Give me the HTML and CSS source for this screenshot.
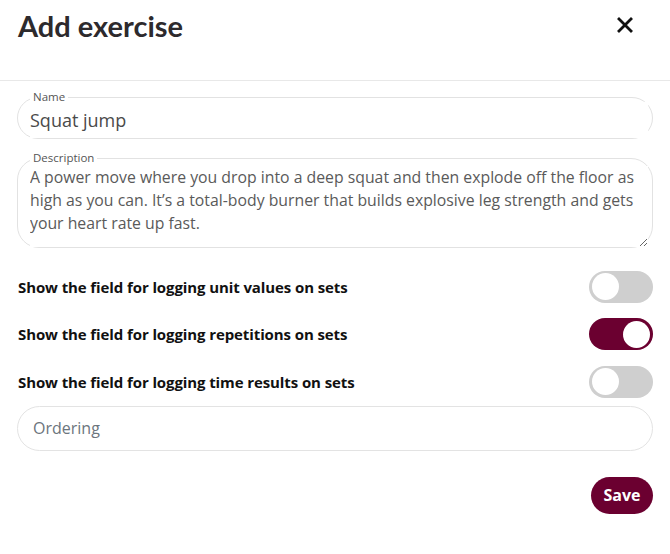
FILE: index.html
```html
<!DOCTYPE html>
<html lang="en">
<head>
<meta charset="utf-8">
<title>Add exercise</title>
<link rel="stylesheet" href="styles.css">
</head>
<body>
<div class="modal">
  <header class="modal-header">
    <h1 class="title">Add exercise</h1>
    <button class="close" aria-label="Close">
      <svg width="16" height="16" viewBox="0 0 16 16"><path d="M2 2L14 14M14 2L2 14" stroke="#111" stroke-width="2.8" stroke-linecap="square" fill="none"/></svg>
    </button>
  </header>
  <form class="form">
    <fieldset class="field field-name">
      <legend class="legend">Name</legend>
      <input class="field-input" type="text" value="Squat jump">
    </fieldset>
    <fieldset class="field field-desc">
      <legend class="legend">Description</legend>
      <textarea class="field-area">A power move where you drop into a deep squat and then explode off the floor as high as you can. It’s a total-body burner that builds explosive leg strength and gets your heart rate up fast.</textarea>
    </fieldset>
    <div class="toggles">
      <div class="toggle-row">
        <span class="toggle-label">Show the field for logging unit values on sets</span>
        <span class="switch"><span class="knob"></span></span>
      </div>
      <div class="toggle-row">
        <span class="toggle-label">Show the field for logging repetitions on sets</span>
        <span class="switch on"><span class="knob"></span></span>
      </div>
      <div class="toggle-row">
        <span class="toggle-label">Show the field for logging time results on sets</span>
        <span class="switch"><span class="knob"></span></span>
      </div>
    </div>
    <input class="ordering" type="text" placeholder="Ordering">
    <div class="actions">
      <button type="button" class="save">Save</button>
    </div>
  </form>
</div>
</body>
</html>
```
FILE: styles.css
```css
* { box-sizing: border-box; }
html, body { margin: 0; padding: 0; background: #fff; }
body { font-family: "Open Sans", "Liberation Sans", sans-serif; color: #222; }

.modal { width: 670px; }

.modal-header {
  height: 81px;
  border-bottom: 1px solid #e8e8e8;
  display: flex;
  justify-content: space-between;
  align-items: flex-start;
  padding: 0 37px 0 18px;
}
.title {
  margin: 7px 0 0;
  font-family: Lato, "Open Sans", sans-serif;
  font-weight: 700;
  font-size: 29px;
  line-height: 38px;
  color: #2d2a2d;
  letter-spacing: 0;
}
.close {
  margin-top: 17px;
  padding: 0;
  border: 0;
  background: none;
  width: 16px;
  height: 16px;
  display: block;
}
.close svg { display: block; }

.form { padding: 9px 17px 0; display: flex; flex-direction: column; }

.field {
  margin: 0;
  border: 1px solid #e2e2e2;
  border-radius: 22px;
  padding: 0 4px 0 12px;
  min-width: 0;
}
.legend {
  font-size: 11.5px;
  line-height: 14px;
  color: #555;
  padding: 0 3px;
  margin-left: 0;
}
.field-input {
  display: block;
  width: 100%;
  border: 0;
  outline: none;
  font-family: "Open Sans", sans-serif;
  font-size: 18px;
  color: #4a4a4a;
  padding: 0;
  height: 36px;
  line-height: 24px;
  margin-top: -2px;
}
.field-desc { margin-top: 12px; }
.field-area {
  display: block;
  width: 100%;
  border: 0;
  outline: none;
  resize: vertical;
  font-family: "Open Sans", sans-serif;
  font-size: 15.8px;
  line-height: 23px;
  color: #5a5a5a;
  padding: 0;
  height: 81px;
  margin-top: 1px;
  overflow: hidden;
}

.toggles { margin-top: 15px; display: flex; flex-direction: column; }
.toggle-row {
  height: 47.5px;
  display: flex;
  align-items: center;
  justify-content: space-between;
  padding-left: 1px;
}
.toggle-label {
  font-weight: 700;
  font-size: 15px;
  color: #111;
  letter-spacing: -0.1px;
}
.switch {
  width: 64px;
  height: 32px;
  border-radius: 16px;
  background: #cfcfcf;
  display: flex;
  align-items: center;
  padding: 0 3px;
}
.knob {
  width: 27px;
  height: 27px;
  border-radius: 50%;
  background: #fff;
}
.switch.on { background: #6b0030; justify-content: flex-end; }

.ordering {
  margin-top: 0;
  height: 45px;
  border: 1px solid #e3e3e3;
  border-radius: 23px;
  padding: 0 15px;
  font-family: "Open Sans", sans-serif;
  font-size: 16px;
  color: #333;
  outline: none;
}
.ordering::placeholder { color: #6c757d; }

.actions { display: flex; justify-content: flex-end; margin-top: 26px; }
.save {
  width: 62px;
  height: 37px;
  border: 0;
  border-radius: 19px;
  background: #6b0030;
  color: #fff;
  font-family: "Open Sans", sans-serif;
  font-weight: 700;
  font-size: 16px;
  padding: 0;
}
```
